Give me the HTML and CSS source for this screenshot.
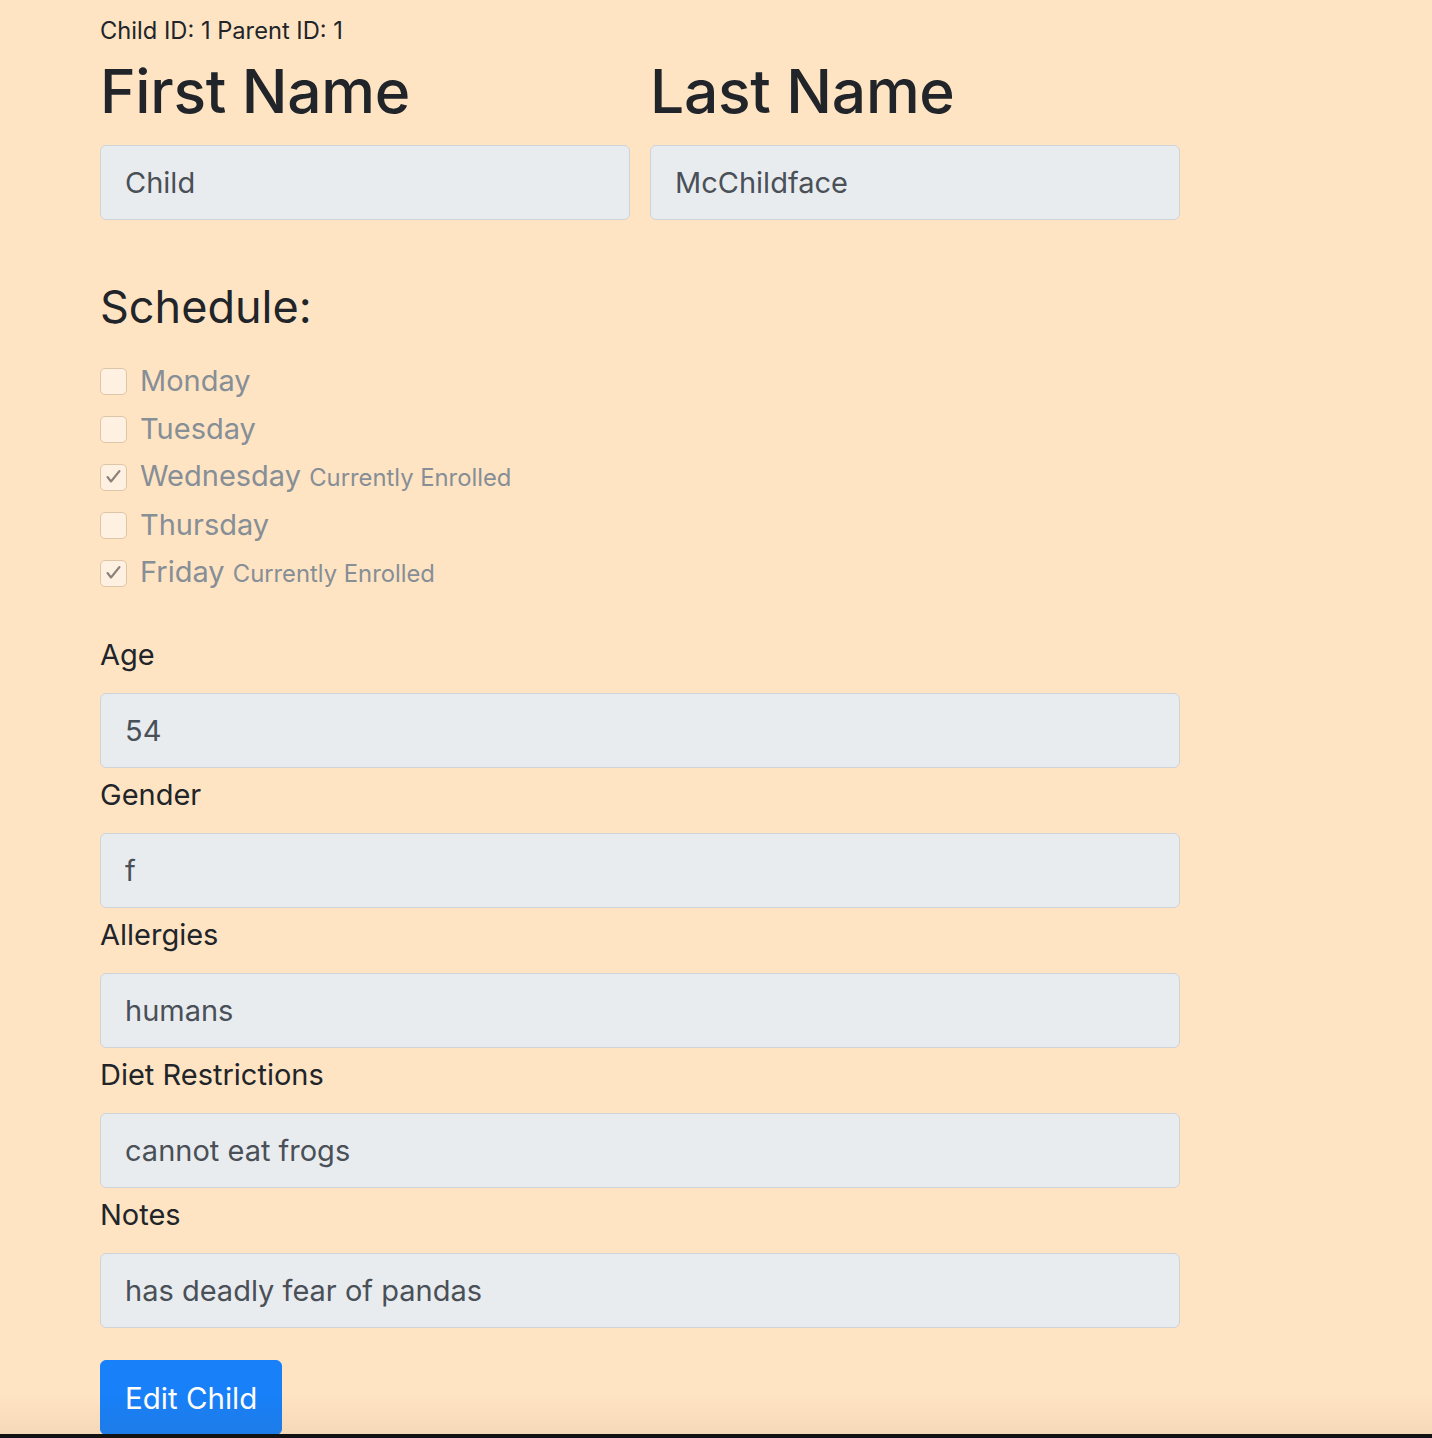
FILE: index.html
```html
<!DOCTYPE html>
<html lang="en">
<head>
<meta charset="utf-8">
<title>Edit Child</title>
<link rel="stylesheet" href="styles.css">
</head>
<body>
<main class="page">
  <p class="ids">Child ID: 1 Parent ID: 1</p>
  <div class="names">
    <div class="name-col">
      <h1 class="name-title">First Name</h1>
      <input class="field" type="text" value="Child" readonly>
    </div>
    <div class="name-col">
      <h1 class="name-title">Last Name</h1>
      <input class="field" type="text" value="McChildface" readonly>
    </div>
  </div>

  <h2 class="schedule">Schedule:</h2>
  <div class="days">
    <div class="day"><span class="box"></span><span class="day-name">Monday</span></div>
    <div class="day"><span class="box"></span><span class="day-name">Tuesday</span></div>
    <div class="day"><span class="box"><svg viewBox="0 0 27 27" width="27" height="27"><path d="M7.5 13 L11 17.5 L19.5 7" fill="none" stroke="#8a827a" stroke-width="2.1" stroke-linecap="round" stroke-linejoin="round"/></svg></span><span class="day-name">Wednesday <small class="enrolled">Currently Enrolled</small></span></div>
    <div class="day"><span class="box"></span><span class="day-name">Thursday</span></div>
    <div class="day"><span class="box"><svg viewBox="0 0 27 27" width="27" height="27"><path d="M7.5 13 L11 17.5 L19.5 7" fill="none" stroke="#8a827a" stroke-width="2.1" stroke-linecap="round" stroke-linejoin="round"/></svg></span><span class="day-name">Friday <small class="enrolled">Currently Enrolled</small></span></div>
  </div>

  <div class="fields">
    <label class="field-label">Age</label>
    <input class="field" type="text" value="54" readonly>
    <label class="field-label">Gender</label>
    <input class="field" type="text" value="f" readonly>
    <label class="field-label">Allergies</label>
    <input class="field" type="text" value="humans" readonly>
    <label class="field-label">Diet Restrictions</label>
    <input class="field" type="text" value="cannot eat frogs" readonly>
    <label class="field-label">Notes</label>
    <input class="field" type="text" value="has deadly fear of pandas" readonly>
  </div>

  <button class="btn" type="button">Edit Child</button>
</main>
<div class="edge-shade"></div>
<div class="edge-bar"></div>
</body>
</html>
```

FILE: styles.css
```css
html, body {
  margin: 0;
  padding: 0;
}

body {
  background: #ffe4c4;
  color: #212529;
  font-family: Inter, "Noto Sans", "Liberation Sans", sans-serif;
  overflow: hidden;
}

.page {
  width: 1080px;
  padding: 17px 0 0 100px;
}

.ids {
  margin: 0;
  font-size: 23.7px;
  line-height: 28px;
}

.names {
  display: flex;
  gap: 20px;
  margin-top: 10px;
}

.name-col {
  flex: 1;
}

.name-title {
  margin: 0 0 18px;
  font-size: 60.5px;
  font-weight: 500;
  line-height: 72px;
  letter-spacing: -0.3px;
}

.field {
  display: block;
  box-sizing: border-box;
  width: 100%;
  height: 75px;
  margin: 0;
  padding: 0 24px;
  background: #e9ecef;
  border: 1px solid #cdd3d9;
  border-radius: 6px;
  color: #495057;
  font-family: inherit;
  font-size: 29px;
  outline: none;
}

.schedule {
  margin: 60px 0 23px;
  font-size: 45px;
  font-weight: 400;
  line-height: 54px;
}

.days {
  display: flex;
  flex-direction: column;
}

.day {
  display: flex;
  align-items: center;
  gap: 13px;
  height: 48px;
  color: #868e96;
}

.box {
  flex: none;
  box-sizing: border-box;
  width: 27px;
  height: 27px;
  border: 1px solid #dfc5a6;
  border-radius: 5px;
  background: #fff1e1;
}

.box svg {
  display: block;
  margin: -1px;
}

.day-name {
  font-size: 29px;
  line-height: 48px;
}

.enrolled {
  font-size: 23.8px;
}

.fields {
  display: flex;
  flex-direction: column;
  margin-top: 31px;
}

.field-label {
  display: block;
  font-size: 29px;
  line-height: 53px;
  margin-bottom: 12px;
}

.btn {
  display: block;
  box-sizing: border-box;
  margin-top: 32px;
  height: 75px;
  padding: 0 24px;
  background: #1880f8;
  border: 1px solid #1880f8;
  border-radius: 6px;
  color: #fff;
  font-family: inherit;
  font-size: 29.5px;
}

.edge-shade {
  position: fixed;
  left: 0;
  right: 0;
  bottom: 4px;
  height: 40px;
  background: linear-gradient(to bottom, rgba(110, 70, 20, 0), rgba(110, 70, 20, 0.07));
  pointer-events: none;
}

.edge-bar {
  position: fixed;
  left: 0;
  right: 0;
  bottom: 0;
  height: 4px;
  background: #121212;
}
```
